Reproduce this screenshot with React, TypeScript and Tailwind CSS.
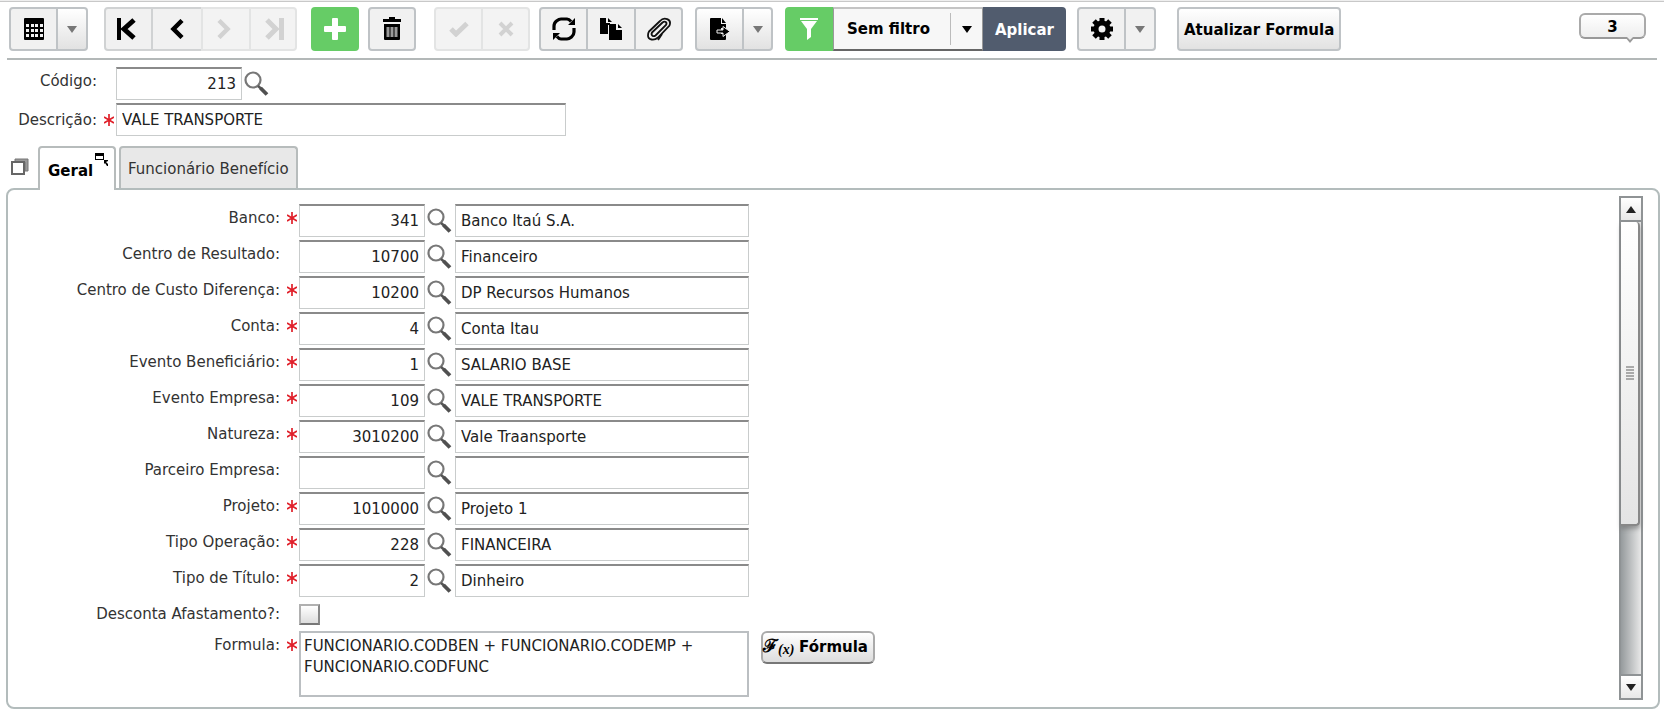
import * as React from 'react';
import { clsx } from 'clsx';

interface LookupField {
  id: string;
  label: string;
  required?: boolean;
  code: string;
  description: string;
}

const FIELDS: LookupField[] = [
  { id: 'banco', label: 'Banco:', required: true, code: '341', description: 'Banco Itaú S.A.' },
  { id: 'resultado', label: 'Centro de Resultado:', code: '10700', description: 'Financeiro' },
  { id: 'custo', label: 'Centro de Custo Diferença:', required: true, code: '10200', description: 'DP Recursos Humanos' },
  { id: 'conta', label: 'Conta:', required: true, code: '4', description: 'Conta Itau' },
  { id: 'beneficiario', label: 'Evento Beneficiário:', required: true, code: '1', description: 'SALARIO BASE' },
  { id: 'empresa', label: 'Evento Empresa:', required: true, code: '109', description: 'VALE TRANSPORTE' },
  { id: 'natureza', label: 'Natureza:', required: true, code: '3010200', description: 'Vale Traansporte' },
  { id: 'parceiro', label: 'Parceiro Empresa:', code: '', description: '' },
  { id: 'projeto', label: 'Projeto:', required: true, code: '1010000', description: 'Projeto 1' },
  { id: 'operacao', label: 'Tipo Operação:', required: true, code: '228', description: 'FINANCEIRA' },
  { id: 'titulo', label: 'Tipo de Título:', required: true, code: '2', description: 'Dinheiro' },
];

const INPUT = 'h-[33px] min-w-0 border border-t-2 border-[#c9cccc] border-t-[#8a8a8a] bg-white px-[5px] text-[15px] text-[#222] outline-none';

/* Icons */

function GridIcon() {
  return (
    <svg width="20" height="22" viewBox="0 0 20 22">
      <rect width="20" height="22" rx="1" />
      <g fill="#f2f2f2">
        {[6, 11, 16].map(y => [2, 7, 11, 16].map(x => (
          <rect key={`${x}-${y}`} x={x} y={y} width={x === 7 || x === 11 ? 3 : 3} height="3" />
        )))}
      </g>
    </svg>
  );
}

function CaretIcon({ className }: { className?: string }) {
  return (
    <svg width="10" height="7" viewBox="0 0 10 7" className={className} fill="currentColor">
      <path d="M0 0h10L5 7z" />
    </svg>
  );
}

function FirstIcon() {
  return (
    <svg width="20" height="22" viewBox="0 0 20 22" className="mr-1">
      <path d="M0 0h4v22H0z" />
      <path d="M17 2 7 11l10 9" fill="none" stroke="#000" strokeWidth="5" />
    </svg>
  );
}

function PrevIcon() {
  return (
    <svg width="14" height="20" viewBox="0 0 14 20">
      <path d="M12 1.500 3.500 10l8.500 8.500" fill="none" stroke="#000" strokeWidth="4.500" />
    </svg>
  );
}

function NextIcon() {
  return (
    <svg width="14" height="20" viewBox="0 0 14 20" className="mr-1">
      <path d="M2 1.500 10.500 10 2 18.500" fill="none" stroke="#d2d2d2" strokeWidth="4.500" />
    </svg>
  );
}

function LastIcon() {
  return (
    <svg width="20" height="22" viewBox="0 0 20 22" className="ml-1">
      <path d="M14 0h5v22h-5z" fill="#d2d2d2" />
      <path d="m2 2 9 9-9 9" fill="none" stroke="#d2d2d2" strokeWidth="5" />
    </svg>
  );
}

function PlusIcon() {
  return (
    <svg width="22" height="22" viewBox="0 0 22 22" fill="#fff">
      <path d="M8 1q0-1 1-1h4q1 0 1 1v7h7q1 0 1 1v4q0 1-1 1h-7v7q0 1-1 1H9q-1 0-1-1v-7H1q-1 0-1-1V9q0-1 1-1h7z" />
    </svg>
  );
}

function TrashIcon() {
  return (
    <svg width="18" height="24" viewBox="0 0 18 24">
      <path d="M6 2V0h6v2h6v3H0V2z" />
      <path d="M1 7h16v15q0 1-1 1H2q-1 0-1-1z" />
      <path d="M3.500 10h3v10h-3zM7.500 10h3v10h-3zM11.500 10h3v10h-3z" fill="#999" />
    </svg>
  );
}

function CheckIcon() {
  return (
    <svg width="20" height="16" viewBox="0 0 20 16">
      <path d="m2 8 5 5L18 2.500" fill="none" stroke="#d2d2d2" strokeWidth="5" />
    </svg>
  );
}

function CrossIcon() {
  return (
    <svg width="16" height="16" viewBox="0 0 16 16">
      <path d="m2 2 12 12M14 2 2 14" fill="none" stroke="#d2d2d2" strokeWidth="4" />
    </svg>
  );
}

function RefreshIcon() {
  return (
    <svg width="24" height="24" viewBox="0 0 24 24">
      <path d="M2 13V9q0-3 2.500-5T9 2h6q2 0 4 2.500M22 11v4q0 3-2.500 5T15 22H9q-2 0-4-2.500" fill="none" stroke="#000" strokeWidth="3.200" />
      <path d="M23 1v7h-7zM1 23v-7h7z" />
    </svg>
  );
}

function CopyIcon() {
  return (
    <svg width="23" height="24" viewBox="0 0 23 24">
      <path d="M0 1h6v5h4v2H8v9H0z" />
      <path d="m8 1 4 4H8z" />
      <path d="M9 7h7v6h6v10H9z" />
      <path d="m18 7 4 4h-4z" />
    </svg>
  );
}

function ClipIcon() {
  return (
    <svg width="26" height="24" viewBox="0 0 26 24" fill="none" stroke="#111" strokeWidth="1.800">
      <path d="M3 14.500 14 4C18-.500 26 2 23.500 8.500L12 20.500C8 24 2 23 2 18.500c0-2 0-2.500 1-4z" />
      <path d="M6 15.500 16.500 5.500c2.500-2 5 0 3.500 2.500L9.500 18.500c-2 1.500-5 0-3.500-3z" />
      <path d="M16 17l-4 6" />
    </svg>
  );
}

function ExportIcon() {
  return (
    <svg width="20" height="22" viewBox="0 0 20 22">
      <path d="M1 0h10v6h5v4h-5v6h5v5q0 1-1 1H1q-1 0-1-1V1q0-1 1-1z" />
      <path d="m12 0 4 5h-4z" />
      <path d="M7 12h6V8.500l7 5-7 5V15H7z" stroke="#eee" />
    </svg>
  );
}

function FunnelIcon() {
  return (
    <svg width="18" height="22" viewBox="0 0 18 22" fill="#fff">
      <path d="M0 0h18v2H0zM1 3h16l-6 8v8l-4 3V11z" />
    </svg>
  );
}

function GearIcon() {
  return (
    <svg width="22" height="22" viewBox="0 0 22 22">
      <circle cx="11" cy="11" r="6" fill="none" stroke="#000" strokeWidth="5" />
      <g stroke="#000" strokeWidth="5">
        <path d="M11 0v4M11 18v4M0 11h4M18 11h4M3 3l3 3M16 16l3 3M19 3l-3 3M6 16l-3 3" />
      </g>
    </svg>
  );
}

function SearchIcon() {
  return (
    <svg width="25" height="25" viewBox="0 0 25 25" fill="none">
      <circle cx="9" cy="9" r="7.500" stroke="#777" strokeWidth="2.200" />
      <path d="m14 15 3.500 3" stroke="#555" strokeWidth="2.500" />
      <path d="m16.500 17 6.500 6.500" stroke="#505050" strokeWidth="3.800" />
    </svg>
  );
}

function RequiredMark() {
  return (
    <svg width="10" height="12" viewBox="0 0 10 12" stroke="#e0202a" strokeWidth="1.700">
      <path d="M5 0v12M0 3l10 6M10 3 0 9" />
    </svg>
  );
}

function StackIcon() {
  return (
    <svg width="18" height="18" viewBox="0 0 18 18">
      <path d="M4 1h13v12h-3V4H4z" fill="#999" stroke="#777" />
      <rect x="1" y="4" width="12" height="12" fill="#fff" stroke="#666" strokeWidth="2" />
    </svg>
  );
}

function DetachIcon() {
  return (
    <svg width="14" height="13" viewBox="0 0 14 13">
      <path d="M0 0h9v7H0zM1 3v3h7V3z" fillRule="evenodd" />
      <path d="M9 7h4v1l-2 1 2 2v2h-1l-2-3-1 1z" />
    </svg>
  );
}

/* Building blocks */

interface ToolButtonProps {
  label: string;
  className: string;
  disabled?: boolean;
  children: React.ReactNode;
}

function ToolButton({ label, className, disabled, children }: ToolButtonProps) {
  return (
    <button
      type="button"
      aria-label={label}
      disabled={disabled}
      className={clsx('flex h-11 shrink-0 items-center justify-center', className)}
    >
      {children}
    </button>
  );
}

const FLAT = 'border-2 border-[#bfc3c6] bg-[#f1f1f1]';
const RAISED = 'border-2 border-[#bfc3c6] bg-linear-to-b from-white to-[#e2e2e2]';
const MUTED = 'border-2 border-[#e3e4e4] bg-[#f3f3f3]';

function Label({ htmlFor, required, className, children }: {
  htmlFor: string;
  required?: boolean;
  className: string;
  children: React.ReactNode;
}) {
  return (
    <label htmlFor={htmlFor} className={clsx('flex shrink-0 justify-end pr-px leading-7 text-[#333]', className)}>
      {children}
      <span className="ml-[7px] flex h-7 w-[11px] items-center">{required && <RequiredMark />}</span>
    </label>
  );
}

function LookupRow({ field }: { field: LookupField }) {
  return (
    <div className="flex items-start">
      <Label htmlFor={field.id} required={field.required} className="w-[291px]">{field.label}</Label>
      <input id={field.id} defaultValue={field.code} className={clsx(INPUT, 'w-[126px] text-right')} />
      <button type="button" aria-label={`Pesquisar ${field.label}`} className="mt-1 mr-[3px] ml-[2px] shrink-0">
        <SearchIcon />
      </button>
      <input aria-label={`Descrição ${field.label}`} defaultValue={field.description} className={clsx(INPUT, 'w-[294px]')} />
    </div>
  );
}

function Toolbar() {
  return (
    <div className="mx-[7px] flex h-[58px] items-start border-b-2 border-[#b3b8b8] pt-[5px] pr-[11px] pl-[2px] text-black">
      <ToolButton label="Modo grade" className={clsx(FLAT, 'w-[49px] rounded-l')}><GridIcon /></ToolButton>
      <ToolButton label="Opções de grade" className={clsx(RAISED, 'w-[30px] rounded-r border-l-0')}>
        <CaretIcon className="text-[#777]" />
      </ToolButton>

      <div className="ml-4 flex">
        <ToolButton label="Primeiro" className={clsx(FLAT, 'w-[49px] rounded-l border-[#d0d2d3]')}><FirstIcon /></ToolButton>
        <ToolButton label="Anterior" className={clsx(FLAT, 'w-12 border-x-0 border-[#d0d2d3]')}><PrevIcon /></ToolButton>
        <ToolButton label="Próximo" disabled className={clsx(MUTED, 'w-12 border-r-0')}><NextIcon /></ToolButton>
        <ToolButton label="Último" disabled className={clsx(MUTED, 'w-12 rounded-r')}><LastIcon /></ToolButton>
      </div>

      <ToolButton label="Adicionar" className="ml-[14px] w-12 rounded bg-[#66cc66]"><PlusIcon /></ToolButton>
      <ToolButton label="Excluir" className={clsx(FLAT, 'ml-[9px] w-12 rounded')}><TrashIcon /></ToolButton>

      <div className="ml-[18px] flex">
        <ToolButton label="Salvar" disabled className={clsx(MUTED, 'w-[49px] rounded-l border-[#dcdddd]')}><CheckIcon /></ToolButton>
        <ToolButton label="Cancelar" disabled className={clsx(MUTED, 'w-[47px] rounded-r border-l-0 border-[#dcdddd]')}><CrossIcon /></ToolButton>
      </div>

      <div className="ml-[9px] flex">
        <ToolButton label="Atualizar" className={clsx(FLAT, 'w-[49px] rounded-l')}><RefreshIcon /></ToolButton>
        <ToolButton label="Duplicar" className={clsx(FLAT, 'w-12 border-l-0')}><CopyIcon /></ToolButton>
        <ToolButton label="Anexos" className={clsx(FLAT, 'w-[47px] rounded-r border-l-0')}><ClipIcon /></ToolButton>
      </div>

      <div className="ml-3 flex">
        <ToolButton label="Exportar" className={clsx(RAISED, 'w-[49px] rounded-l')}><ExportIcon /></ToolButton>
        <ToolButton label="Opções de exportação" className={clsx(RAISED, 'w-[29px] rounded-r border-l-0')}>
          <CaretIcon className="text-[#777]" />
        </ToolButton>
      </div>

      <div className="ml-3 flex">
        <ToolButton label="Filtro" className="w-12 rounded-l bg-[#66cc66]"><FunnelIcon /></ToolButton>
        <div className="relative h-11 w-[150px] border border-t-2 border-b-2 border-[#999] border-t-[#c4c4c4] border-b-[#666] bg-[#f7f7f7]">
          <select aria-label="Filtro aplicado" className="h-full w-full appearance-none bg-transparent pl-[13px] text-[15px] font-bold outline-none">
            <option>Sem filtro</option>
          </select>
          <span className="pointer-events-none absolute top-1 right-0 flex h-8 w-8 items-center justify-center border-l border-[#bbb]">
            <CaretIcon />
          </span>
        </div>
        <button type="button" className="h-11 w-[83px] rounded-r bg-[#515c6e] pt-[3px] text-[15px] font-bold text-white">Aplicar</button>
      </div>

      <div className="ml-[11px] flex">
        <ToolButton label="Configurações" className={clsx(FLAT, 'w-[49px] rounded-l')}><GearIcon /></ToolButton>
        <ToolButton label="Mais opções" className={clsx(FLAT, 'w-[30px] rounded-r border-l-0')}>
          <CaretIcon className="text-[#777]" />
        </ToolButton>
      </div>

      <button type="button" className={clsx(RAISED, 'ml-[21px] h-11 shrink-0 rounded px-[5px] pt-[3px] text-[15px] font-bold whitespace-nowrap')}>
        Atualizar Formula
      </button>

      <button type="button" className="relative mt-[6px] ml-auto h-[26px] w-[67px] rounded-md border-2 border-[#aaa] border-b-[#999] bg-linear-to-b from-white to-[#eee] text-[15px] leading-6 font-bold">
        3
        <svg width="10" height="6" viewBox="0 0 10 6" className="absolute right-[9px] -bottom-[6px]">
          <path d="M0 0h10L5 6z" fill="#999" />
          <path d="M2 0h6L5 3z" fill="#eee" />
        </svg>
      </button>
    </div>
  );
}

function Scrollbar() {
  return (
    <div className="flex w-6 shrink-0 flex-col border-2 border-[#8f9395]">
      <button type="button" aria-label="Rolar para cima" className="flex h-6 items-center justify-center border-b-2 border-[#8f9395] bg-linear-to-b from-white to-[#e8e8e8]">
        <CaretIcon className="rotate-180" />
      </button>
      <div className="flex-1 bg-linear-to-r from-[#969b9d] to-[#e8e8e8]">
        <div className="flex h-[304px] w-[19px] items-center justify-center rounded-tr rounded-br border-r-2 border-b-2 border-[#888] bg-linear-to-b from-white to-[#e4e4e4] shadow-[0_3px_4px_#6668]">
          <svg width="8" height="15" viewBox="0 0 8 15">
            <path d="M0 1h8M0 4h8M0 7h8M0 10h8M0 13h8" stroke="#aaa" strokeWidth="2" />
          </svg>
        </div>
      </div>
      <button type="button" aria-label="Rolar para baixo" className="flex h-6 items-center justify-center border-t-2 border-[#8f9395] bg-linear-to-b from-white to-[#e8e8e8]">
        <CaretIcon />
      </button>
    </div>
  );
}

export default function App() {
  return (
    <div className="bg-white font-['DejaVu_Sans',Verdana,sans-serif] text-[15px] text-[#222]">
      <div className="h-[2px] border-b border-[#c8c8c8] bg-[#eee]" />
      <Toolbar />

      {/* Record header */}
      <div className="flex flex-col gap-[3px] pt-[7px]">
        <div className="flex items-start">
          <Label htmlFor="codigo" className="w-[116px]">Código:</Label>
          <input id="codigo" defaultValue="213" className={clsx(INPUT, 'w-[126px] text-right')} />
          <button type="button" aria-label="Pesquisar código" className="mt-1 ml-[2px]"><SearchIcon /></button>
        </div>
        <div className="flex items-center">
          <Label htmlFor="descricao" required className="w-[116px]">Descrição:</Label>
          <input id="descricao" defaultValue="VALE TRANSPORTE" className={clsx(INPUT, 'w-[450px]')} />
        </div>
      </div>

      {/* Tabs */}
      <div className="mt-[10px] flex items-end pl-[11px]" role="tablist">
        <button type="button" aria-label="Abrir em janelas" className="mr-[9px] mb-3"><StackIcon /></button>
        <button type="button" role="tab" aria-selected="true" className="relative z-10 -mb-[2px] flex h-11 w-[78px] items-start gap-[2px] rounded-t border-2 border-b-0 border-[#b7bcbc] bg-white pt-[5px] pl-2 font-bold text-black">
          <span className="pt-[7px]">Geral</span>
          <DetachIcon />
        </button>
        <button type="button" role="tab" aria-selected="false" className="ml-[3px] h-[42px] rounded-t border-2 border-b-0 border-[#b7bcbc] bg-[#e8e8e8] px-[7px] pt-[3px] text-[#333]">
          Funcionário Benefício
        </button>
      </div>

      {/* Panel */}
      <div className="mr-1 ml-[6px] flex justify-between rounded-lg border-2 border-[#b3bcbc] pt-[6px] pr-[15px] pb-[7px]" role="tabpanel">
        <div className="flex flex-col gap-[3px] pt-2 pb-[3px]">
          {FIELDS.map(field => <LookupRow key={field.id} field={field} />)}
          <div className="flex items-center">
            <Label htmlFor="desconta" className="w-[291px]">Desconta Afastamento?:</Label>
            <input
              id="desconta"
              type="checkbox"
              className="size-[21px] appearance-none border-2 border-[#b0b0b0] border-r-[#888] border-b-[#777] bg-linear-to-b from-white to-[#ddd]"
            />
          </div>
          <div className="flex items-start">
            <Label htmlFor="formula" required className="w-[291px]">Formula:</Label>
            <textarea
              id="formula"
              defaultValue="FUNCIONARIO.CODBEN + FUNCIONARIO.CODEMP + FUNCIONARIO.CODFUNC"
              className="h-[66px] w-[450px] resize-none border-2 border-[#bbbfc2] px-[3px] pt-[3px] leading-[21px] outline-none"
            />
            <button type="button" className="ml-3 flex h-[33px] w-[114px] items-center justify-between rounded-md border-2 border-[#aaa] border-b-[#777] bg-linear-to-b from-white to-[#ddd] pr-[5px] font-bold text-black">
              <span className="flex items-end font-['Liberation_Serif','DejaVu_Serif',serif] leading-5">
                <span className="pb-1 text-[18px]">ℱ</span>
                <span className="text-[14px] italic">(x)</span>
              </span>
              Fórmula
            </button>
          </div>
        </div>
        <Scrollbar />
      </div>
    </div>
  );
}
